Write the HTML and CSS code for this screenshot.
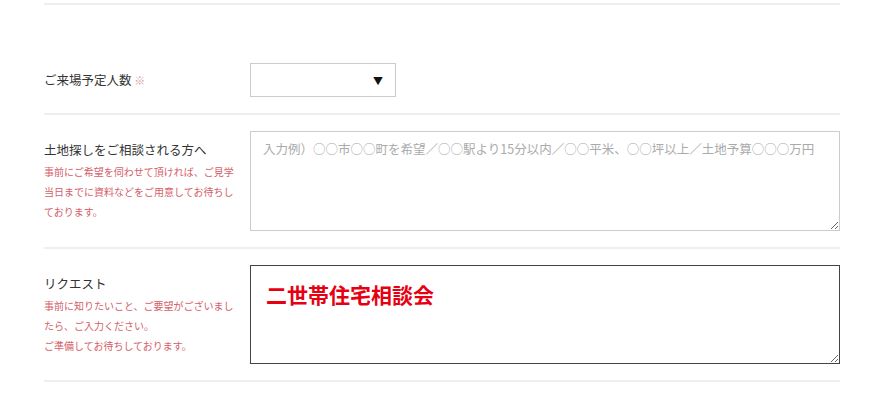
FILE: index.html
```html
<!DOCTYPE html>
<html lang="ja">
<head>
<meta charset="utf-8">
<link rel="stylesheet" href="styles.css">
</head>
<body>
<div class="form">
  <div class="row row-select">
    <div class="label"><span class="title">ご来場予定人数</span> <span class="mark">※</span></div>
    <div class="field">
      <div class="select"><span class="arrow">▼</span></div>
    </div>
  </div>
  <div class="row">
    <div class="label">
      <div class="title">土地探しをご相談される方へ</div>
      <div class="note">事前にご希望を伺わせて頂ければ、ご見学<br>当日までに資料などをご用意してお待ちし<br>ております。</div>
    </div>
    <div class="field">
      <textarea class="area" placeholder="入力例）○○市○○町を希望／○○駅より15分以内／○○平米、○○坪以上／土地予算○○○万円"></textarea>
    </div>
  </div>
  <div class="row">
    <div class="label">
      <div class="title">リクエスト</div>
      <div class="note">事前に知りたいこと、ご要望がございまし<br>たら、ご入力ください。<br>ご準備してお待ちしております。</div>
    </div>
    <div class="field">
      <textarea class="area area-filled">二世帯住宅相談会</textarea>
    </div>
  </div>
</div>
</body>
</html>
```
FILE: styles.css
```css
html, body {
  margin: 0;
  padding: 0;
  background: #ffffff;
}
body {
  font-family: "Noto Sans CJK JP", "Noto Sans", sans-serif;
  color: #333333;
}
.form {
  margin: 3px 40px 0 44px;
  width: 796px;
  border-top: 2px solid #eeeeee;
}
.row {
  display: grid;
  grid-template-columns: 206px 590px;
  padding: 16px 0 16px;
  border-bottom: 2px solid #eeeeee;
}
.row-select {
  padding-top: 58px;
  padding-bottom: 16px;
  align-items: center;
}
.label {
  font-size: 12.5px;
}
.row:not(.row-select) .label {
  padding-top: 7px;
}
.title {
  line-height: 24px;
  color: #333333;
}
.mark {
  color: #d9a0a0;
  font-size: 11px;
}
.note {
  color: #d4606a;
  font-size: 10px;
  line-height: 20px;
}
.select {
  height: 32px;
  border: 1px solid #cccccc;
  display: flex;
  align-items: center;
  justify-content: flex-end;
  padding-right: 12px;
  box-sizing: content-box;
  width: 132px;
}
.arrow {
  font-size: 10px;
  color: #111111;
}
.area {
  display: block;
  width: 590px;
  height: 100px;
  box-sizing: border-box;
  border: 1px solid #cccccc;
  padding: 8px 12px;
  margin: 0;
  font-family: "Noto Sans CJK JP", "Noto Sans", sans-serif;
  font-size: 12.5px;
  line-height: 18px;
  color: #333333;
  resize: vertical;
  outline: none;
}
.area::placeholder {
  color: #aaaaaa;
}
.area-filled {
  height: 99px;
  border: 1px solid #444444;
  color: #e60012;
  font-weight: bold;
  font-size: 21px;
  line-height: 30px;
  padding: 13px 15px;
}
```
